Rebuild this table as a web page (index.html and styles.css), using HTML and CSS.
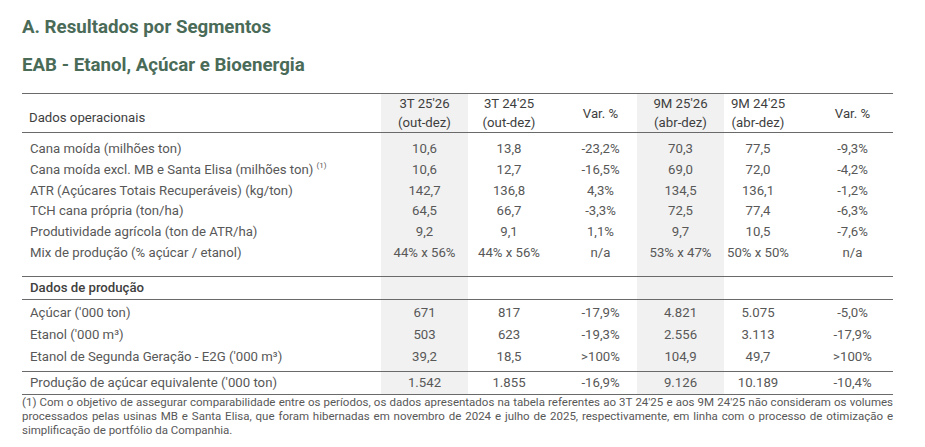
FILE: index.html
```html
<!DOCTYPE html>
<html lang="pt-BR">
<head>
<meta charset="utf-8">
<link rel="stylesheet" href="styles.css">
</head>
<body>
<div class="page">
  <h1 class="title">A. Resultados por Segmentos</h1>
  <h2 class="subtitle">EAB - Etanol, Açúcar e Bioenergia</h2>
  <table class="data">
    <colgroup>
      <col class="c-label"><col class="c1"><col class="c2"><col class="c3"><col class="c4"><col class="c5"><col class="c6">
    </colgroup>
    <thead>
      <tr>
        <th class="lab">Dados operacionais</th>
        <th class="num sh">3T 25'26<br>(out-dez)</th>
        <th class="num">3T 24'25<br>(out-dez)</th>
        <th class="num var">Var. %</th>
        <th class="num sh">9M 25'26<br>(abr-dez)</th>
        <th class="num">9M 24'25<br>(abr-dez)</th>
        <th class="num var2">Var. %</th>
      </tr>
    </thead>
    <tbody class="ops">
      <tr><td class="lab">Cana moída (milhões ton)</td><td class="num sh">10,6</td><td class="num">13,8</td><td class="num var">-23,2%</td><td class="num sh">70,3</td><td class="num">77,5</td><td class="num var2">-9,3%</td></tr>
      <tr><td class="lab">Cana moída excl. MB e Santa Elisa (milhões ton)<sup class="fn">(1)</sup></td><td class="num sh">10,6</td><td class="num">12,7</td><td class="num var">-16,5%</td><td class="num sh">69,0</td><td class="num">72,0</td><td class="num var2">-4,2%</td></tr>
      <tr><td class="lab">ATR (Açúcares Totais Recuperáveis) (kg/ton)</td><td class="num sh">142,7</td><td class="num">136,8</td><td class="num var">4,3%</td><td class="num sh">134,5</td><td class="num">136,1</td><td class="num var2">-1,2%</td></tr>
      <tr><td class="lab">TCH cana própria (ton/ha)</td><td class="num sh">64,5</td><td class="num">66,7</td><td class="num var">-3,3%</td><td class="num sh">72,5</td><td class="num">77,4</td><td class="num var2">-6,3%</td></tr>
      <tr><td class="lab">Produtividade agrícola (ton de ATR/ha)</td><td class="num sh">9,2</td><td class="num">9,1</td><td class="num var">1,1%</td><td class="num sh">9,7</td><td class="num">10,5</td><td class="num var2">-7,6%</td></tr>
      <tr><td class="lab">Mix de produção (% açúcar / etanol)</td><td class="num sh">44% x 56%</td><td class="num">44% x 56%</td><td class="num var">n/a</td><td class="num sh">53% x 47%</td><td class="num">50% x 50%</td><td class="num var2">n/a</td></tr>
    </tbody>
    <tbody class="sect">
      <tr><td class="lab strong">Dados de produção</td><td class="sh"></td><td></td><td></td><td class="sh"></td><td></td><td></td></tr>
    </tbody>
    <tbody class="prod">
      <tr><td class="lab">Açúcar ('000 ton)</td><td class="num sh">671</td><td class="num">817</td><td class="num var">-17,9%</td><td class="num sh">4.821</td><td class="num">5.075</td><td class="num var2">-5,0%</td></tr>
      <tr><td class="lab">Etanol ('000 m³)</td><td class="num sh">503</td><td class="num">623</td><td class="num var">-19,3%</td><td class="num sh">2.556</td><td class="num">3.113</td><td class="num var2">-17,9%</td></tr>
      <tr><td class="lab">Etanol de Segunda Geração - E2G ('000 m³)</td><td class="num sh">39,2</td><td class="num">18,5</td><td class="num var">&gt;100%</td><td class="num sh">104,9</td><td class="num">49,7</td><td class="num var2">&gt;100%</td></tr>
    </tbody>
    <tbody class="total">
      <tr><td class="lab">Produção de açúcar equivalente ('000 ton)</td><td class="num sh">1.542</td><td class="num">1.855</td><td class="num var">-16,9%</td><td class="num sh">9.126</td><td class="num">10.189</td><td class="num var2">-10,4%</td></tr>
    </tbody>
  </table>
  <p class="note">(1) Com o objetivo de assegurar comparabilidade entre os períodos, os dados apresentados na tabela referentes ao 3T 24'25 e aos 9M 24'25 não consideram os volumes processados pelas usinas MB e Santa Elisa, que foram hibernadas em novembro de 2024 e julho de 2025, respectivamente, em linha com o processo de otimização e simplificação de portfólio da Companhia.</p>
</div>
</body>
</html>
```

FILE: styles.css
```css
html, body {
  margin: 0;
  padding: 0;
  background: #ffffff;
}

.page {
  width: 871px;
  padding: 15px 0 0 22px;
  font-family: Roboto, "Liberation Sans", sans-serif;
  color: #585858;
}

.title,
.subtitle {
  margin: 0;
  font-size: 18.7px;
  font-weight: 700;
  color: #4a6b58;
  line-height: 24px;
}

.subtitle {
  margin-top: 14px;
  margin-bottom: 16px;
}

.data {
  width: 871px;
  border-collapse: collapse;
  table-layout: fixed;
  font-size: 13.2px;
  border-top: 1.5px solid #6a6a6a;
}

.c-label { width: 359px; }
.c1 { width: 87px; }
.c2 { width: 82px; }
.c3 { width: 87px; }
.c4 { width: 87px; }
.c5 { width: 68px; }
.c6 { width: 101px; }

th, td {
  padding: 0;
  font-weight: 400;
  white-space: nowrap;
}

thead th {
  height: 36px;
  line-height: 19px;
  color: #3e3e3e;
  border-bottom: 1.5px solid #6a6a6a;
}

thead th.lab {
  text-align: left;
  padding-left: 7px;
  padding-top: 8px;
  height: 28px;
}

.lab {
  text-align: left;
  padding-left: 8px;
}

.num { text-align: center; }
.var { padding-left: 14px; }
.var2 { padding-left: 20px; }

.sh { background: #f1f1f1; }

tbody td { height: 21px; line-height: 21px; }

.ops td { height: 20.8px; line-height: 20.8px; }
.ops tr:first-child td { padding-top: 6px; }
.ops tr:last-child td { padding-bottom: 12px; border-bottom: 1.5px solid #6a6a6a; }

.sect td {
  height: 22px;
  border-bottom: 1.5px solid #6a6a6a;
}

.strong {
  color: #404040;
  font-weight: 500;
}

.prod td { height: 22px; line-height: 22px; }
.prod tr:first-child td { padding-top: 2px; }
.prod tr:last-child td { padding-bottom: 3px; border-bottom: 1.5px solid #6a6a6a; }

.total td {
  height: 22px;
  border-bottom: 1.5px solid #6a6a6a;
}

.fn {
  font-size: 8px;
  vertical-align: top;
  line-height: 12px;
  margin-left: 3px;
}

.note {
  margin: 0;
  font-size: 11.5px;
  line-height: 14px;
  text-align: justify;
  color: #585858;
}
```
